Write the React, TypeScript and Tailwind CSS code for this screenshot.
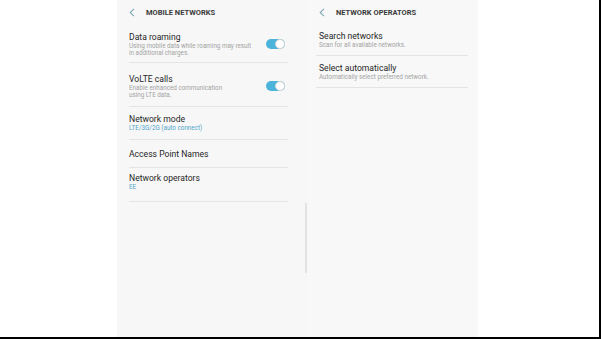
const font = { fontFamily: "Roboto, 'Noto Sans', sans-serif" };

function Toggle() {
  return (
    <div className="relative mr-[3px] h-[10px] w-[19px] shrink-0 rounded-full bg-[#4cb3da]">
      <div className="absolute right-0 top-0 h-[10px] w-[10px] rounded-full border border-[#d4d4d4] bg-white" />
    </div>
  );
}

function Header({ title }: { title: string }) {
  return (
    <div className="flex h-[25px] items-center gap-[11px]">
      <svg width="6" height="9" viewBox="0 0 6 9" className="shrink-0">
        <path d="M5 0.8 L1.2 4.5 L5 8.2" fill="none" stroke="#7fa9b4" strokeWidth="1.1" />
      </svg>
      <span className="text-[7.5px] font-bold text-[#3a3a3a]">{title}</span>
    </div>
  );
}

type Item = { title: string; sub?: string[]; accent?: boolean; toggle?: boolean; pt: string; pb: string };

const LEFT: Item[] = [
  { title: "Data roaming", sub: ["Using mobile data while roaming may result", "in additional charges."], toggle: true, pt: "pt-[4px]", pb: "pb-[5px]" },
  { title: "VoLTE calls", sub: ["Enable enhanced communication", "using LTE data."], toggle: true, pt: "pt-[10px]", pb: "pb-[7px]" },
  { title: "Network mode", sub: ["LTE/3G/2G (auto connect)"], accent: true, pt: "pt-[6px]", pb: "pb-[7px]" },
  { title: "Access Point Names", pt: "pt-[8px]", pb: "pb-[7px]" },
  { title: "Network operators", sub: ["EE"], accent: true, pt: "pt-[4px]", pb: "pb-[10px]" },
];

const RIGHT: Item[] = [
  { title: "Search networks", sub: ["Scan for all available networks."], pt: "pt-[5px]", pb: "pb-[6px]" },
  { title: "Select automatically", sub: ["Automatically select preferred network."], pt: "pt-[6px]", pb: "pb-[6px]" },
];

function Row({ item }: { item: Item }) {
  return (
    <div className={`flex items-center justify-between border-b border-[#e4e4e4] ${item.pt} ${item.pb}`}>
      <div className="flex flex-col">
        <span className="text-[8.6px] leading-[12px] text-[#262626]">{item.title}</span>
        {item.sub?.map((s) => (
          <span
            key={s}
            className={`text-[6.3px] leading-[7px] ${item.accent ? "text-[#4ea5c9]" : "text-[#a3a3a3]"}`}
          >
            {s}
          </span>
        ))}
      </div>
      {item.toggle && <Toggle />}
    </div>
  );
}

export default function App() {
  return (
    <div style={font} className="flex h-[339px] w-[601px] border-b-2 border-r-2 border-black bg-white">
      <div className="ml-[117px] flex">
        <div className="relative w-[190px] bg-[#f7f7f7] pl-[12px] pr-[19px]">
          <Header title="MOBILE NETWORKS" />
          <div className="pt-[2px]">
            {LEFT.map((it) => (
              <Row key={it.title} item={it} />
            ))}
          </div>
          <div className="absolute right-0 top-[203px] h-[70px] w-[2px] bg-[#e3e3e3]" />
        </div>
        <div className="w-[171px] bg-[#f8f8f8] pl-[9px] pr-[10px]">
          <div className="pl-[3px]">
            <Header title="NETWORK OPERATORS" />
          </div>
          {RIGHT.map((it) => (
            <div key={it.title} className="[&>div]:pl-[3px]">
              <Row item={it} />
            </div>
          ))}
        </div>
      </div>
    </div>
  );
}
